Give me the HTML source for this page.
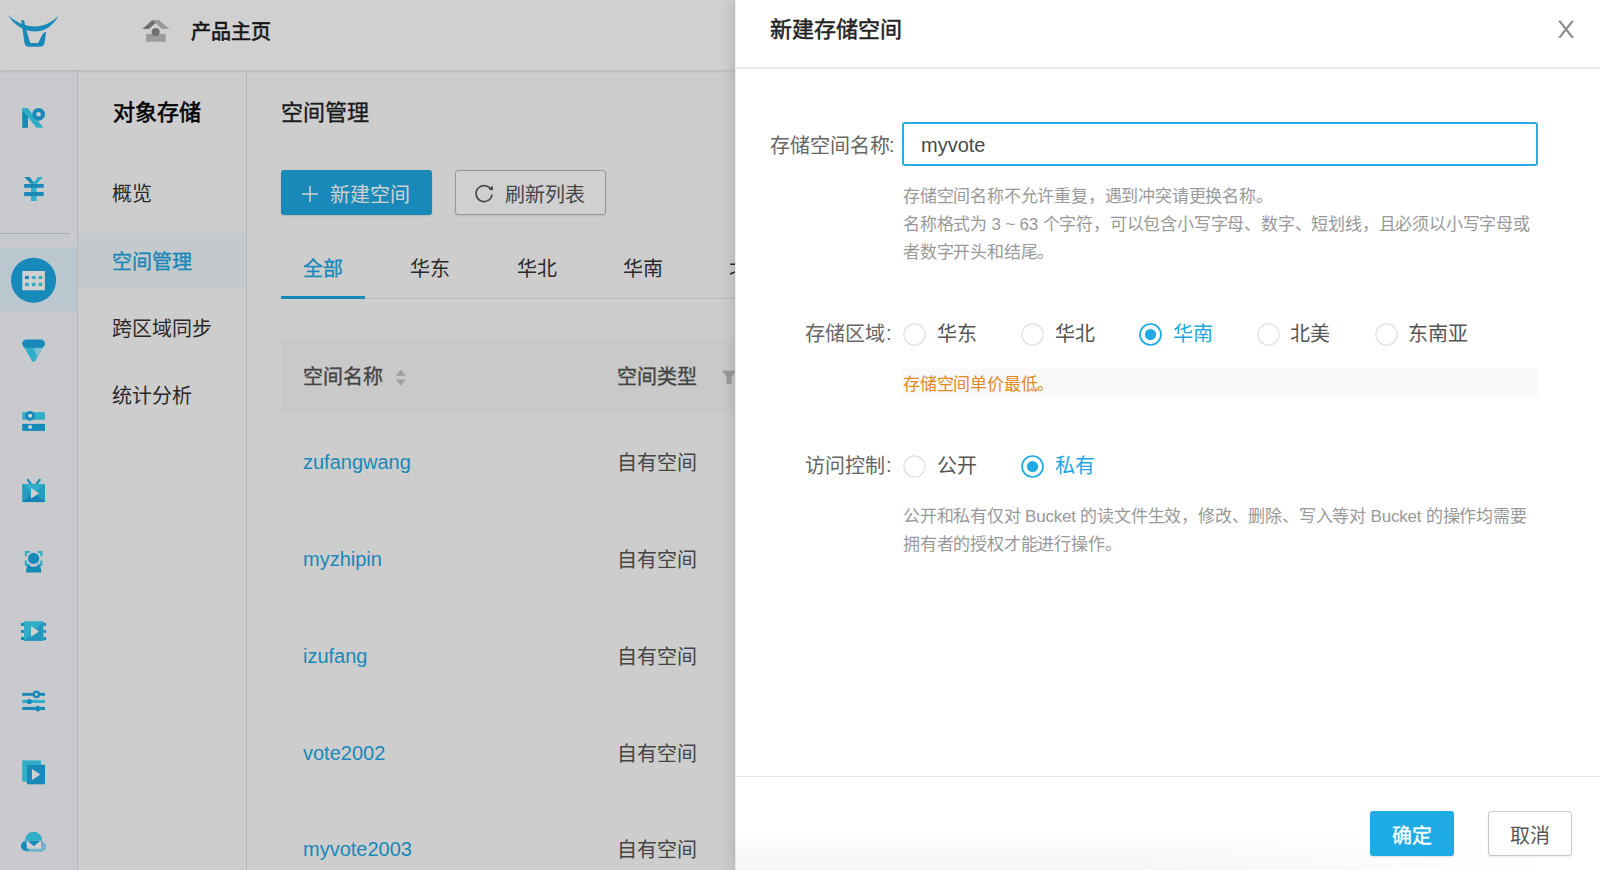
<!DOCTYPE html>
<html lang="zh-CN">
<head>
<meta charset="utf-8">
<style>
*{box-sizing:border-box;margin:0;padding:0}
html,body{width:1600px;height:870px;overflow:hidden;background:#fff;font-family:"Liberation Sans",sans-serif;color:#333}
.abs{position:absolute}
.t{position:absolute;white-space:nowrap;line-height:1}
#page{position:absolute;left:0;top:0;width:1600px;height:870px;background:#fcfcfc;z-index:0}
#hdr{position:absolute;left:0;top:0;width:1600px;height:70px;background:#fff;box-shadow:0 1px 3px rgba(0,0,0,.13);z-index:2}
.m{-webkit-text-stroke:0.35px currentColor}
.sb{-webkit-text-stroke:0.6px currentColor}
#side{position:absolute;left:0;top:70px;width:78px;height:800px;background:#f5f8fd;border-right:1px solid #dfe1e4}
#nav2{position:absolute;left:78px;top:70px;width:169px;height:800px;background:#fcfcfc;border-right:1px solid #e0e0e0}
#mask{position:absolute;left:0;top:0;width:1600px;height:870px;background:rgba(0,0,0,.185)}
#drawer{position:absolute;left:735px;top:0;width:865px;height:870px;background:#fff;box-shadow:-3px 0 12px rgba(0,0,0,.13)}
#drawer:before{content:"";position:absolute;left:0;top:0;width:1px;height:870px;background:#ededed}
.radio{position:absolute;width:22px;height:22px;border:1px solid #dadada;border-radius:50%;background:#fff}
.radio.on{border:1.6px solid #1ea8e2}
.radio.on:after{content:"";position:absolute;left:4px;top:4px;width:11px;height:11px;border-radius:50%;background:#1ea8e2}
.b20{font-size:20px}
.h17{font-size:17px;letter-spacing:-0.2px;color:#999}
</style>
</head>
<body>
<div id="page">
  <div id="hdr">
    <svg class="abs" style="left:0;top:0" width="70" height="60" viewBox="0 0 70 60">
      <path d="M8,15 C14,26 26,31.6 35,31.6 C45,31.6 53,26 59,15 C53,22 43,26.5 35,26.5 C26,26.5 15,22 8,15Z" fill="#1ea8e2"/>
      <path d="M21.3,21 C21.5,19.8 23.5,19.6 24.3,21.2 L25.5,26.8 L27,32 L30.2,43 L38.2,43 L42.3,34.5 C43.2,33 44.5,32.2 46.1,32.1 L44.6,42.5 C44.2,45.3 42.8,46.7 40,46.7 L28.8,46.7 C26.3,46.7 24.9,45.3 24.5,43 Z" fill="#1ea8e2"/>
    </svg>
    <svg class="abs" style="left:135px;top:12px" width="40" height="36" viewBox="135 12 40 36">
      <path d="M142.4,28.9 L149,28.9 L159,19.9 L152.4,19.9Z" fill="#8a8a8a"/>
      <path d="M152.4,19.9 L159,19.9 L169.3,28.9 L161.9,28.9Z" fill="#bcbcbc"/>
      <rect x="146" y="33.9" width="19.8" height="7.85" fill="#c0c0c0"/>
      <circle cx="155.7" cy="32" r="4" fill="#888"/>
    </svg>
    <div class="t sb" style="left:191px;top:22px;font-size:20px;color:#1a1a1a">产品主页</div>
  </div>
  <div id="side">
    <svg class="abs" style="left:0;top:-70px" width="78" height="870" viewBox="0 0 78 870">
      <!-- icon1 -->
      <path d="M22.2,108 L28,108 L28,127.8 L22.2,127.8Z" fill="#1eaae4"/>
      <path d="M22.2,108 L27.7,108 L43.5,127.8 L36.4,127.8 L22.2,110Z" fill="#3cd6f5"/>
      <circle cx="38.6" cy="114.3" r="4.35" fill="none" stroke="#1eaae4" stroke-width="4.1"/>
      <!-- yen -->
      <path d="M24.25,177.1 L29.8,177.1 L34.5,183.5 L31,184Z" fill="#1eaae4"/>
      <path d="M37.9,177.1 L43,177.1 L36.6,184 L32.4,184Z" fill="#3cd6f5"/>
      <rect x="31" y="183" width="5.6" height="18" fill="#3cd6f5"/>
      <rect x="24.1" y="184" width="19.6" height="3.8" fill="#1eaae4"/>
      <rect x="24.1" y="192" width="19.6" height="4.1" fill="#1eaae4"/>
      <!-- divider -->
      <rect x="0" y="233" width="69" height="1" fill="#c9d3ec"/>
      <!-- selected row -->
      <rect x="0" y="248" width="77" height="63" fill="#e6f4fd"/>
      <circle cx="33.55" cy="280.25" r="22.55" fill="#1eaae4"/>
      <rect x="22.3" y="271" width="22.6" height="19.3" fill="#fff"/>
      <rect x="25" y="275.9" width="3.9" height="3.2" fill="#1eaae4"/>
      <rect x="31.9" y="275.9" width="3.7" height="3.2" fill="#3cd6f5"/>
      <rect x="38.6" y="275.9" width="3.6" height="3.2" fill="#3cd6f5"/>
      <rect x="25" y="282.8" width="3.9" height="3.3" fill="#3cd6f5"/>
      <rect x="31.9" y="282.8" width="3.7" height="3.3" fill="#3cd6f5"/>
      <rect x="38.6" y="282.8" width="3.6" height="3.3" fill="#3cd6f5"/>
      <!-- funnel -->
      <path d="M24,347 L43,347 L35.5,360.5 C34.6,362.3 32.6,362.3 31.7,360.5Z" fill="#3cd6f5"/>
      <path d="M33.4,347.5 L43,347.5 L37.1,357.5Z" fill="#97ecff"/>
      <rect x="22.2" y="339.5" width="22.8" height="8.3" rx="4.15" fill="#1eaae4"/>
      <!-- server -->
      <rect x="22.2" y="412.2" width="22.8" height="7.5" fill="#3cd6f5"/>
      <circle cx="30.1" cy="415.8" r="3.45" fill="#fff" stroke="#1eaae4" stroke-width="2.9"/>
      <rect x="22.2" y="423.9" width="22.8" height="7" fill="#1eaae4"/>
      <circle cx="30.1" cy="427" r="2" fill="#fff"/>
      <!-- tv -->
      <path d="M27.9,479.9 L30.8,484" stroke="#1eaae4" stroke-width="2.2" stroke-linecap="round"/>
      <path d="M39.7,479.9 L36.6,484" stroke="#1eaae4" stroke-width="2.2" stroke-linecap="round"/>
      <rect x="22.2" y="483.9" width="22.8" height="18.2" fill="#2cc0ea"/>
      <path d="M22.2,483.9 L45,483.9 L33.6,493Z" fill="#3cd6f5"/>
      <path d="M22.2,502.1 L45,502.1 L33.6,493Z" fill="#1ca0dc"/>
      <path d="M31,488 L31,498.4 L39.1,493.3Z" fill="#fff"/>
      <!-- face -->
      <path d="M25.9,556.2 L25.9,552 L30,552" fill="none" stroke="#3cd6f5" stroke-width="2.2"/>
      <path d="M37.7,552 L41.3,552 L41.3,556.2" fill="none" stroke="#3cd6f5" stroke-width="2.2"/>
      <path d="M25.9,560.6 L25.9,564.9 L29.8,564.9" fill="none" stroke="#3cd6f5" stroke-width="2.2"/>
      <path d="M41.3,560.6 L41.3,564.9 L37.4,564.9" fill="none" stroke="#3cd6f5" stroke-width="2.2"/>
      <path d="M28,565 C30,566.2 32,566.8 33.6,566.8 C35.2,566.8 37.2,566.2 39.2,565 C40.6,566 41.3,569 41.3,572.6 L26.1,572.6 C26.1,569 26.7,566 28,565Z" fill="#1eaae4"/>
      <circle cx="33.6" cy="558.4" r="5.6" fill="#1eaae4"/>
      <!-- film -->
      <rect x="24.1" y="621.6" width="19.3" height="19.3" fill="#2ab8e6"/>
      <path d="M24.1,621.6 L43.4,621.6 L24.1,640.9Z" fill="#3cd6f5"/>
      <rect x="21" y="622.9" width="3.1" height="2.9" fill="#1eaae4"/>
      <rect x="21" y="630.1" width="3.1" height="2.7" fill="#1eaae4"/>
      <rect x="21" y="637" width="3.1" height="3" fill="#1eaae4"/>
      <rect x="43.4" y="622.9" width="2.7" height="2.9" fill="#1eaae4"/>
      <rect x="43.4" y="630.1" width="2.7" height="2.7" fill="#1eaae4"/>
      <rect x="43.4" y="637" width="2.7" height="3" fill="#1eaae4"/>
      <path d="M31,626 L31,636.7 L39.1,631.4Z" fill="#fff"/>
      <!-- sliders -->
      <rect x="22.2" y="692.9" width="22.8" height="2.9" fill="#1eaae4"/>
      <rect x="22.2" y="699.9" width="22.8" height="3.1" fill="#3cd6f5"/>
      <rect x="22.2" y="706.9" width="22.8" height="3.1" fill="#1eaae4"/>
      <circle cx="36.4" cy="694.4" r="2.6" fill="#fff" stroke="#1eaae4" stroke-width="2.4"/>
      <circle cx="29.4" cy="701.5" r="2.6" fill="#1eaae4"/>
      <ellipse cx="37.9" cy="708.6" rx="2.4" ry="2.9" fill="#1eaae4"/>
      <!-- video -->
      <rect x="22.2" y="760.4" width="18.8" height="21.3" fill="#3cd6f5"/>
      <rect x="27" y="764.8" width="18" height="19.5" fill="#1eaae4"/>
      <path d="M32,768.9 L32,780.1 L40.4,774.4Z" fill="#fff"/>
      <!-- cloud mail -->
      <circle cx="41.3" cy="846.5" r="5" fill="#88deff"/>
      <rect x="26" y="846" width="16" height="5.7" fill="#88deff"/>
      <circle cx="25.9" cy="846" r="5" fill="#1eaae4"/>
      <circle cx="33.6" cy="840.2" r="8.5" fill="#3cd6f5"/>
      <rect x="26.8" y="840.7" width="14.2" height="8.1" fill="#fff"/>
      <path d="M27.5,840.7 L40.3,840.7 L33.9,846.2Z" fill="#1eaae4"/>
    </svg>
  </div>
  <div id="nav2">
    <div class="t sb" style="left:35px;top:32px;font-size:22px;color:#000">对象存储</div>
    <div class="t b20" style="left:34px;top:114px;color:#333">概览</div>
    <div class="abs" style="left:0;top:163px;width:168px;height:56px;background:#f1f8fb"></div>
    <div class="t m b20" style="left:34px;top:182px;color:#1ea8e2">空间管理</div>
    <div class="t b20" style="left:34px;top:249px;color:#333">跨区域同步</div>
    <div class="t b20" style="left:34px;top:316px;color:#333">统计分析</div>
  </div>
  <div id="content">
    <div class="t m" style="left:281px;top:102px;font-size:22px;color:#1f1f1f">空间管理</div>
    <div class="abs" style="left:281px;top:170px;width:151px;height:45px;background:#1ea8e2;border-radius:3px;box-shadow:0 1px 2px rgba(0,0,0,.12)"></div>
    <svg class="abs" style="left:302px;top:186px" width="16" height="16" viewBox="0 0 16 16"><path d="M8,0 V16 M0,8 H16" stroke="#fff" stroke-width="1.5"/></svg>
    <div class="t b20" style="left:330px;top:185px;color:#fff">新建空间</div>
    <div class="abs" style="left:455px;top:170px;width:151px;height:45px;border:1px solid #bababa;border-radius:3px;background:#fff;box-shadow:0 1px 2px rgba(0,0,0,.1)"></div>
    <svg class="abs" style="left:474px;top:183px" width="21" height="21" viewBox="0 0 21 21"><path d="M17.2,7 A8,8 0 1 0 18,11.5" fill="none" stroke="#555" stroke-width="1.6"/><path d="M14.5,6.2 L19.2,7.2 L18.6,2.4Z" fill="#555"/></svg>
    <div class="t b20" style="left:505px;top:185px;color:#555">刷新列表</div>
    <div class="abs" style="left:281px;top:298px;width:454px;height:1px;background:#e4e4e4"></div>
    <div class="abs" style="left:281px;top:296px;width:84px;height:3px;background:#1ea8e2"></div>
    <div class="t m b20" style="left:303px;top:259px;color:#1ea8e2">全部</div>
    <div class="t b20" style="left:410px;top:259px;color:#333">华东</div>
    <div class="t b20" style="left:517px;top:259px;color:#333">华北</div>
    <div class="t b20" style="left:623px;top:259px;color:#333">华南</div>
    <div class="t b20" style="left:729px;top:259px;color:#333">北美</div>
    <div class="abs" style="left:281px;top:338px;width:454px;height:76px;background:#f7f7f7"></div>
    <div class="t m b20" style="left:303px;top:367px;color:#555">空间名称</div>
    <svg class="abs" style="left:395px;top:369px" width="12" height="17" viewBox="0 0 12 17"><path d="M0.8,6.7 L5.8,0.8 L10.8,6.7Z M0.8,10.6 L10.8,10.6 L5.8,16.8Z" fill="#c4c4c4"/></svg>
    <div class="t m b20" style="left:617px;top:367px;color:#555">空间类型</div>
    <svg class="abs" style="left:722px;top:370px" width="16" height="14" viewBox="0 0 16 14"><path d="M0,0.8 L14,0.8 L9.5,6.5 L9.5,13.8 L4.5,13.8 L4.5,6.5Z" fill="#bdbdbd"/></svg>
    <div class="t b20" style="left:303px;top:452px;color:#1ea8e2">zufangwang</div>
    <div class="t b20" style="left:616.5px;top:453px;color:#555">自有空间</div>
    <div class="t b20" style="left:303px;top:549px;color:#1ea8e2">myzhipin</div>
    <div class="t b20" style="left:616.5px;top:550px;color:#555">自有空间</div>
    <div class="t b20" style="left:303px;top:646px;color:#1ea8e2">izufang</div>
    <div class="t b20" style="left:616.5px;top:647px;color:#555">自有空间</div>
    <div class="t b20" style="left:303px;top:743px;color:#1ea8e2">vote2002</div>
    <div class="t b20" style="left:616.5px;top:744px;color:#555">自有空间</div>
    <div class="t b20" style="left:303px;top:839px;color:#1ea8e2">myvote2003</div>
    <div class="t b20" style="left:616.5px;top:840px;color:#555">自有空间</div>
  </div>
</div>
<div id="mask"></div>
<div id="drawer">
  <div class="abs" style="left:0;top:828px;width:865px;height:42px;background:linear-gradient(rgba(0,0,0,0),rgba(0,0,0,.04));-webkit-mask-image:linear-gradient(to right,#000 0%,#000 45%,rgba(0,0,0,0) 95%)"></div>
  <div class="t m" style="left:35px;top:19px;font-size:22px;color:#222;-webkit-text-stroke:0.5px #222">新建存储空间</div>
  <svg class="abs" style="left:822px;top:20px" width="19" height="19" viewBox="0 0 19 19"><path d="M0.9,0.8 L3.7,0.8 L17.2,17.8 L14.4,17.8Z M14.4,0.8 L17.2,0.8 L3.7,17.8 L0.9,17.8Z" fill="#8c8c8c"/></svg>
  <div class="abs" style="left:0;top:67px;width:865px;height:2px;background:#ececec"></div>

  <div class="t b20" style="left:35px;top:136px;color:#666">存储空间名称</div>
  <div class="t b20" style="left:154px;top:135px;color:#666">:</div>
  <div class="abs" style="left:167px;top:122px;width:636px;height:44px;border:2px solid #29ace4;border-radius:3px"></div>
  <div class="t b20" style="left:186px;top:135px;color:#4a4a4a">myvote</div>
  <div class="t h17" style="left:168px;top:188px">存储空间名称不允许重复，遇到冲突请更换名称。</div>
  <div class="t h17" style="left:168px;top:216px">名称格式为 3 ~ 63 个字符，可以包含小写字母、数字、短划线，且必须以小写字母或</div>
  <div class="t h17" style="left:168px;top:244px">者数字开头和结尾。</div>

  <div class="t b20" style="left:70px;top:324px;color:#666">存储区域</div>
  <div class="t b20" style="left:151px;top:323px;color:#666">:</div>
  <svg class="abs" style="left:167.5px;top:322.5px" width="23" height="23" viewBox="0 0 23 23"><circle cx="11.5" cy="11.5" r="10.6" fill="#fff" stroke="#e0e0e0" stroke-width="1.2"/></svg>
  <div class="t b20" style="left:202px;top:324px;color:#555">华东</div>
  <svg class="abs" style="left:285.5px;top:322.5px" width="23" height="23" viewBox="0 0 23 23"><circle cx="11.5" cy="11.5" r="10.6" fill="#fff" stroke="#e0e0e0" stroke-width="1.2"/></svg>
  <div class="t b20" style="left:320px;top:324px;color:#555">华北</div>
  <svg class="abs" style="left:403.5px;top:322.5px" width="23" height="23" viewBox="0 0 23 23"><circle cx="11.5" cy="11.5" r="10.5" fill="#fff" stroke="#1eaae4" stroke-width="1.7"/><circle cx="11.5" cy="11.5" r="5.6" fill="#1eaae4"/></svg>
  <div class="t b20" style="left:438px;top:324px;color:#1ea8e2">华南</div>
  <svg class="abs" style="left:521.5px;top:322.5px" width="23" height="23" viewBox="0 0 23 23"><circle cx="11.5" cy="11.5" r="10.6" fill="#fff" stroke="#e0e0e0" stroke-width="1.2"/></svg>
  <div class="t b20" style="left:555px;top:324px;color:#555">北美</div>
  <svg class="abs" style="left:639.5px;top:322.5px" width="23" height="23" viewBox="0 0 23 23"><circle cx="11.5" cy="11.5" r="10.6" fill="#fff" stroke="#e0e0e0" stroke-width="1.2"/></svg>
  <div class="t b20" style="left:673px;top:324px;color:#555">东南亚</div>
  <div class="abs" style="left:167px;top:369px;width:636px;height:28px;background:#f9f9f9"></div>
  <div class="t h17" style="left:168px;top:376px;color:#e28a24">存储空间单价最低。</div>

  <div class="t b20" style="left:70px;top:456px;color:#666">访问控制</div>
  <div class="t b20" style="left:151px;top:455px;color:#666">:</div>
  <svg class="abs" style="left:167.5px;top:454.5px" width="23" height="23" viewBox="0 0 23 23"><circle cx="11.5" cy="11.5" r="10.6" fill="#fff" stroke="#e0e0e0" stroke-width="1.2"/></svg>
  <div class="t b20" style="left:202px;top:456px;color:#555">公开</div>
  <svg class="abs" style="left:285.5px;top:454.5px" width="23" height="23" viewBox="0 0 23 23"><circle cx="11.5" cy="11.5" r="10.5" fill="#fff" stroke="#1eaae4" stroke-width="1.7"/><circle cx="11.5" cy="11.5" r="5.6" fill="#1eaae4"/></svg>
  <div class="t b20" style="left:320px;top:456px;color:#1ea8e2">私有</div>
  <div class="t h17" style="left:168px;top:508px">公开和私有仅对 Bucket 的读文件生效，修改、删除、写入等对 Bucket 的操作均需要</div>
  <div class="t h17" style="left:168px;top:536px">拥有者的授权才能进行操作。</div>

  <div class="abs" style="left:0;top:776px;width:865px;height:1px;background:#e6e6e6"></div>
  <div class="abs" style="left:635px;top:811px;width:84px;height:45px;background:#1eabe4;border-radius:3px;box-shadow:0 1px 2px rgba(0,0,0,.12)"></div>
  <div class="t m b20" style="left:657px;top:826px;color:#fff">确定</div>
  <div class="abs" style="left:753px;top:811px;width:84px;height:45px;border:1px solid #c8c8c8;border-radius:3px;box-shadow:0 1px 2px rgba(0,0,0,.08)"></div>
  <div class="t b20" style="left:775px;top:826px;color:#555">取消</div>
</div>
</body>
</html>
